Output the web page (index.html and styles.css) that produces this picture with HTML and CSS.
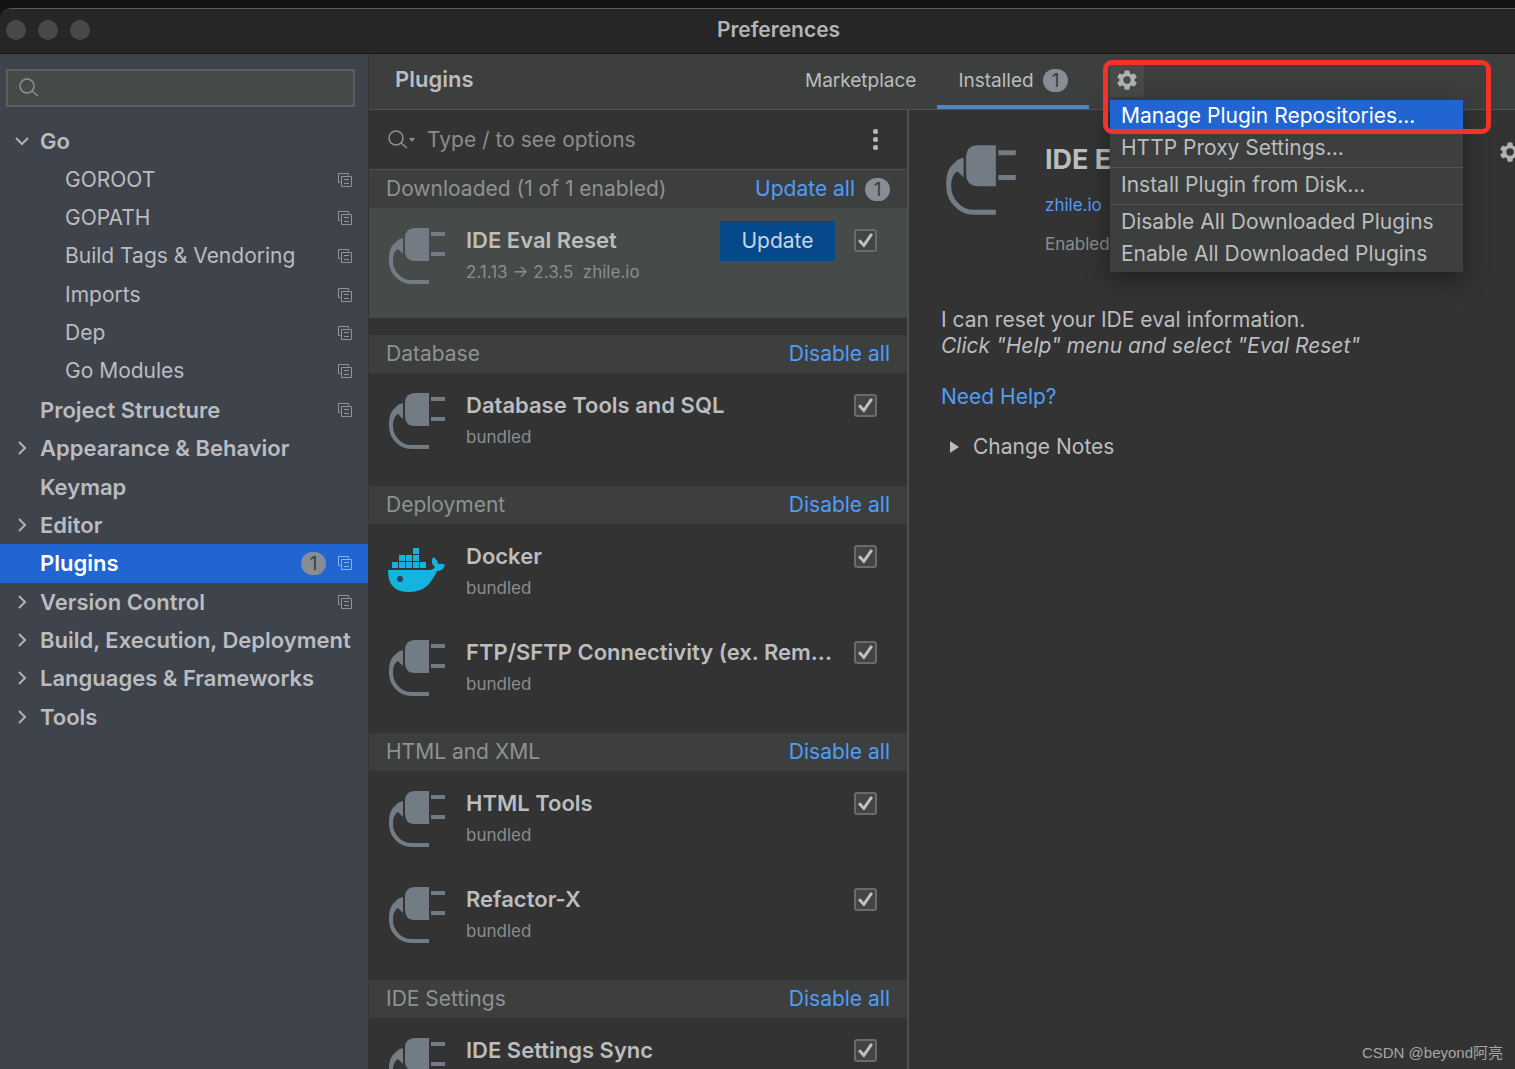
FILE: index.html
```html
<!DOCTYPE html>
<html lang="en">
<head>
<meta charset="utf-8">
<title>Preferences</title>
<link rel="stylesheet" href="styles.css">
</head>
<body>
<svg class="defs" aria-hidden="true">
  <symbol id="plug" viewBox="0 0 58 58">
    <path fill="currentColor" d="M41 1H27Q17 1 17 11V24Q17 34 27 34H41z"/>
    <path fill="currentColor" d="M15 11V27L10 22Q6 24 5 31L1 31Q1 20 8 15Q10 12 15 11z"/>
    <path fill="none" stroke="currentColor" stroke-width="4" d="M43 7H57M43 27H57M3 30V34C3 45 12 55 23 55H41"/>
  </symbol>
  <symbol id="docker" viewBox="0 0 58 58">
    <path fill="currentColor" d="M0 27H40Q46 27 47 24Q42 20 45 14Q50 17 50 21Q54 20 57 22Q55 28 49 28Q45 37 39 43Q32 49 20 49Q8 49 3 41Q0 36 0 27z"/>
    <path fill="currentColor" d="M4 19h6v6H4zM11 19h6v6h-6zM18 19h6v6h-6zM25 19h6v6h-6zM32 19h6v6h-6zM11 12h6v6h-6zM18 12h6v6h-6zM25 12h6v6h-6zM25 5h6v6h-6z"/>
    <circle cx="12" cy="36" r="3" fill="#2b4450"/>
  </symbol>
  <symbol id="copy" viewBox="0 0 16 16">
    <path fill="none" stroke="currentColor" d="M3.500 10.500H1.500V1.500H11.500V3.500M4.500 4.500H14.500V14.500H4.500zM7 7.500h5M7 11.500h5"/>
  </symbol>
  <symbol id="gear" viewBox="0 0 24 24">
    <path fill="currentColor" fill-rule="evenodd" d="M9.500 1.500H14.500L15.200 4.800A8 8 0 0 1 17 5.900L20.200 4.800 22.700 9.100 20.200 11.300V12.700L22.700 14.900 20.200 19.200 17 18.100A8 8 0 0 1 15.200 19.200L14.500 22.500H9.500L8.800 19.200A8 8 0 0 1 7 18.100L3.800 19.200 1.300 14.900 3.800 12.700V11.300L1.300 9.100 3.800 4.800 7 5.900A8 8 0 0 1 8.800 4.800zM12 16a4 4 0 1 1 0-8 4 4 0 0 1 0 8z"/>
  </symbol>
  <symbol id="lens" viewBox="0 0 22 22">
    <path fill="none" stroke="currentColor" stroke-width="1.500" d="M16 9A7 7 0 1 1 2 9A7 7 0 1 1 16 9zM14 14L20 19"/>
  </symbol>
  <symbol id="chevron" viewBox="0 0 16 16">
    <path fill="none" stroke="currentColor" stroke-width="2" d="M5 2L11 8L5 14"/>
  </symbol>
</svg>

<div class="window">
  <header class="titlebar">
    <div class="lights"><i></i><i></i><i></i></div>
    <h1>Preferences</h1>
  </header>
  <div class="body">
    <aside class="sidebar">
      <label class="search">
        <svg class="lens"><use href="#lens"/></svg>
        <input type="search" aria-label="Search settings">
      </label>
      <nav aria-label="Settings">
        <ul class="tree">
          <li class="open"><svg class="chev"><use href="#chevron"/></svg><a href="#">Go</a></li>
          <li class="child"><a href="#">GOROOT</a><svg class="copy"><use href="#copy"/></svg></li>
          <li class="child"><a href="#">GOPATH</a><svg class="copy"><use href="#copy"/></svg></li>
          <li class="child"><a href="#">Build Tags &amp; Vendoring</a><svg class="copy"><use href="#copy"/></svg></li>
          <li class="child"><a href="#">Imports</a><svg class="copy"><use href="#copy"/></svg></li>
          <li class="child"><a href="#">Dep</a><svg class="copy"><use href="#copy"/></svg></li>
          <li class="child"><a href="#">Go Modules</a><svg class="copy"><use href="#copy"/></svg></li>
          <li class="leaf"><a href="#">Project Structure</a><svg class="copy"><use href="#copy"/></svg></li>
          <li><svg class="chev"><use href="#chevron"/></svg><a href="#">Appearance &amp; Behavior</a></li>
          <li class="leaf"><a href="#">Keymap</a></li>
          <li><svg class="chev"><use href="#chevron"/></svg><a href="#">Editor</a></li>
          <li class="leaf selected"><a href="#" aria-current="page">Plugins</a><span class="count">1</span><svg class="copy"><use href="#copy"/></svg></li>
          <li><svg class="chev"><use href="#chevron"/></svg><a href="#">Version Control</a><svg class="copy"><use href="#copy"/></svg></li>
          <li><svg class="chev"><use href="#chevron"/></svg><a href="#">Build, Execution, Deployment</a></li>
          <li><svg class="chev"><use href="#chevron"/></svg><a href="#">Languages &amp; Frameworks</a></li>
          <li><svg class="chev"><use href="#chevron"/></svg><a href="#">Tools</a></li>
        </ul>
      </nav>
    </aside>

    <main class="main">
      <div class="topbar">
        <h2>Plugins</h2>
        <div class="tabs">
          <button class="tab">Marketplace</button>
          <button class="tab active">Installed <span class="count">1</span></button>
          <div class="options">
            <button class="gear" aria-label="Plugin options" aria-expanded="true"><svg><use href="#gear"/></svg></button>
            <div class="menu">
              <button class="hot">Manage Plugin Repositories...</button>
              <button>HTTP Proxy Settings...</button>
              <hr>
              <button>Install Plugin from Disk...</button>
              <hr>
              <button>Disable All Downloaded Plugins</button>
              <button>Enable All Downloaded Plugins</button>
            </div>
            <div class="marker"></div>
          </div>
        </div>
      </div>

      <div class="panes">
        <section class="list">
          <div class="filter">
            <svg class="lens"><use href="#lens"/></svg><i class="caret"></i>
            <input type="text" aria-label="Filter plugins" placeholder="Type / to see options">
            <button class="dots" aria-label="More"><i></i><i></i><i></i></button>
          </div>

          <div class="group">
            <div class="head"><h3>Downloaded (1 of 1 enabled)</h3><a href="#">Update all</a><span class="count">1</span></div>
            <article class="item current">
              <svg class="logo"><use href="#plug"/></svg>
              <div class="info"><h4>IDE Eval Reset</h4><p>2.1.13 → 2.3.5 &nbsp;zhile.io</p></div>
              <button class="update">Update</button>
              <input type="checkbox" checked aria-label="Enable IDE Eval Reset">
            </article>
          </div>

          <div class="group">
            <div class="head"><h3>Database</h3><a href="#">Disable all</a></div>
            <article class="item">
              <svg class="logo"><use href="#plug"/></svg>
              <div class="info"><h4>Database Tools and SQL</h4><p>bundled</p></div>
              <input type="checkbox" checked aria-label="Enable Database Tools and SQL">
            </article>
          </div>

          <div class="group">
            <div class="head"><h3>Deployment</h3><a href="#">Disable all</a></div>
            <article class="item">
              <svg class="logo docker"><use href="#docker"/></svg>
              <div class="info"><h4>Docker</h4><p>bundled</p></div>
              <input type="checkbox" checked aria-label="Enable Docker">
            </article>
            <article class="item">
              <svg class="logo"><use href="#plug"/></svg>
              <div class="info"><h4>FTP/SFTP Connectivity (ex. Rem...</h4><p>bundled</p></div>
              <input type="checkbox" checked aria-label="Enable FTP/SFTP Connectivity">
            </article>
          </div>

          <div class="group">
            <div class="head"><h3>HTML and XML</h3><a href="#">Disable all</a></div>
            <article class="item">
              <svg class="logo"><use href="#plug"/></svg>
              <div class="info"><h4>HTML Tools</h4><p>bundled</p></div>
              <input type="checkbox" checked aria-label="Enable HTML Tools">
            </article>
            <article class="item">
              <svg class="logo"><use href="#plug"/></svg>
              <div class="info"><h4>Refactor-X</h4><p>bundled</p></div>
              <input type="checkbox" checked aria-label="Enable Refactor-X">
            </article>
          </div>

          <div class="group">
            <div class="head"><h3>IDE Settings</h3><a href="#">Disable all</a></div>
            <article class="item">
              <svg class="logo"><use href="#plug"/></svg>
              <div class="info"><h4>IDE Settings Sync</h4></div>
              <input type="checkbox" checked aria-label="Enable IDE Settings Sync">
            </article>
          </div>
        </section>

        <section class="detail">
          <div class="summary">
            <svg class="biglogo"><use href="#plug"/></svg>
            <div class="facts">
              <h3>IDE Eval Reset</h3>
              <a href="#">zhile.io</a>
              <p>Enabled</p>
            </div>
            <button class="gear" aria-label="Plugin settings"><svg><use href="#gear"/></svg></button>
          </div>
          <p class="about">I can reset your IDE eval information.<br><em>Click "Help" menu and select "Eval Reset"</em></p>
          <a class="help" href="#">Need Help?</a>
          <details><summary>Change Notes</summary></details>
        </section>
      </div>
    </main>
  </div>
</div>
<div class="watermark">CSDN @beyond阿亮</div>
</body>
</html>
```

FILE: styles.css
```css
* { box-sizing: border-box; }

body {
  margin: 0;
  height: 100vh;
  overflow: hidden;
  background: #131313;
  color: #bbbdbf;
  font: 21px/26px Inter, "Noto Sans CJK SC", sans-serif;
}

h1, h2, h3, h4, p, ul { margin: 0; padding: 0; }
h1, h2, h3, h4 { font-size: inherit; }
a { color: #4f9df6; text-decoration: none; }
button, input { font: inherit; color: inherit; border: 0; padding: 0; background: none; }
svg { flex: none; }
.defs { position: absolute; width: 0; height: 0; }

/* The window runs past the right edge of the screen. */
.window {
  display: flex;
  flex-direction: column;
  width: calc(100% + 44px);
  height: calc(100vh - 8px);
  margin-top: 8px;
  border-top: 1px solid #5c5c5c;
  border-top-left-radius: 12px;
  overflow: hidden;
}

.titlebar {
  display: grid;
  grid-template-columns: 1fr auto 1fr;
  align-items: center;
  height: 45px;
  flex: none;
  padding: 0 8px 2px 6px;
  background: #262626;
  border-bottom: 1px solid #171717;
}
.titlebar h1 { font-weight: 600; color: #b4b4b4; }
.lights { display: flex; gap: 12px; }
.lights i { width: 20px; height: 20px; border-radius: 50%; background: #484848; }

.body { display: flex; flex: 1; min-height: 0; }

.sidebar { width: 369px; flex: none; background: #3f444c; border-right: 1px solid #323538; }
.search {
  display: flex;
  align-items: center;
  height: 38px;
  margin: 15px 13px 15px 6px;
  padding-left: 10px;
  background: #464a49;
  border: 2px solid #5b5e61;
}
.search input { flex: 1; min-width: 0; outline: 0; }
.lens { width: 22px; height: 22px; color: #8d9291; }

.tree { display: grid; min-height: 614px; list-style: none; font-size: 22px; font-weight: 600; color: #bbbcc0; }
.tree li { display: flex; align-items: center; min-height: 38px; padding: 0 15px 0 14px; }
.tree a { flex: 1; color: inherit; white-space: nowrap; }
.tree .leaf { padding-left: 40px; }
.tree .child { padding-left: 65px; font-size: 21px; font-weight: 400; }
.tree .selected { background: #2065d2; color: #fff; }
.chev { width: 16px; height: 16px; margin-right: 10px; color: #b0b2b5; }
.open .chev { transform: rotate(90deg); }
.copy { width: 16px; height: 16px; color: #8f9399; }
.selected .copy { color: #8fb0e0; }

.count {
  display: inline-block;
  min-width: 25px;
  height: 23px;
  border-radius: 12px;
  background: #868d94;
  color: #3c3f41;
  font-weight: 400;
  font-size: 19px;
  line-height: 23px;
  text-align: center;
}
.tree .count { margin-right: 11px; }

.main { display: flex; flex-direction: column; flex: 1; min-width: 0; }
.topbar {
  display: grid;
  grid-template-columns: 1fr auto 1fr;
  height: 56px;
  flex: none;
  background: #3c3f3e;
  border-bottom: 1px solid #525252;
}
.topbar h2 { padding: 12px 0 0 26px; font-size: 22px; font-weight: 600; }
.tabs { display: flex; }
.tab { padding: 3px 21px 0; font-size: 19px; border-bottom: 4px solid transparent; }
.tab.active { border-color: #4a88c7; }
.tab .count { margin-left: 4px; }
.options { position: relative; padding: 9px 0 0 21px; }
.gear { display: grid; place-items: center; width: 34px; height: 34px; color: #afb1b3; }
.options .gear { background: #484a4a; }
.gear svg { width: 22px; height: 22px; }

.menu {
  position: absolute;
  z-index: 1;
  top: 46px;
  left: 21px;
  display: flex;
  flex-direction: column;
  width: 353px;
  padding-bottom: 2px;
  background: #3c3f3e;
  box-shadow: 0 8px 24px rgba(0, 0, 0, .4);
}
.menu button { height: 32px; padding-left: 11px; text-align: left; white-space: nowrap; }
.menu .hot { background: #2065d2; color: #fff; }
.menu hr { width: 100%; margin: 3px 0 1px; border: 0; border-top: 1px solid #525454; }
.marker {
  position: absolute;
  z-index: 2;
  top: 6px;
  left: 14px;
  width: 388px;
  height: 74px;
  border: 5px solid #f0342a;
  border-radius: 9px;
  pointer-events: none;
}

.panes { display: flex; flex: 1; min-height: 0; background: #333; }
.list { width: 540px; flex: none; overflow: hidden; border-right: 2px solid #505050; }
.filter {
  display: flex;
  align-items: center;
  height: 60px;
  padding: 0 27px 0 18px;
  border-bottom: 1px solid #505050;
}
.caret { border: 3px solid transparent; border-top: 4px solid #8d9291; border-bottom: 0; }
.filter input { flex: 1; min-width: 0; margin-left: 12px; outline: 0; }
.filter input::placeholder { color: #8c8c8c; opacity: 1; }
.dots { display: grid; gap: 3px; padding: 2px; }
.dots i { width: 5px; height: 5px; border-radius: 2px; background: #b5b5b5; }

.group { padding-bottom: 17px; }
.head {
  display: flex;
  align-items: center;
  height: 38px;
  padding: 0 17px;
  background: #3c3f3e;
}
.head h3 { flex: 1; font-weight: 400; color: #909292; }
.head .count { margin-left: 10px; }
.item { display: flex; align-items: flex-start; height: 96px; padding: 19px 30px 0 19px; }
.item.current { height: 110px; background: #464a48; }
.logo { width: 58px; height: 58px; color: #737b84; }
.logo.docker { color: #14b4e0; }
.info { flex: 1; min-width: 0; margin-left: 20px; white-space: nowrap; }
.info h4 { font-size: 22px; font-weight: 600; }
.info p { margin-top: 6px; font-size: 17px; color: #8b8d8d; }
.update {
  width: 115px;
  height: 40px;
  margin: -6px 19px 0 0;
  background: #05498a;
  color: #c6d6e6;
}
input[type="checkbox"] {
  appearance: none;
  display: grid;
  place-items: center;
  flex: none;
  width: 23px;
  height: 23px;
  margin: 2px 0 0;
  border: 2px solid #6b6b6b;
  border-radius: 3px;
  background: #434544;
}
input[type="checkbox"]:checked::before {
  content: "";
  width: 15px;
  height: 15px;
  background: #c0c0c0;
  clip-path: polygon(0 55%, 15% 42%, 38% 66%, 84% 0, 100% 12%, 40% 98%);
}

.detail { flex: 1; min-width: 0; padding: 34px 32px 0; }
.summary { display: flex; align-items: flex-start; margin-left: 4px; }
.biglogo { width: 72px; height: 72px; color: #737b84; }
.facts { flex: 1; margin-left: 28px; font-size: 17px; }
.facts h3 { margin-bottom: 16px; font-size: 27px; line-height: 32px; }
.facts a { display: block; }
.facts p { margin-top: 13px; color: #8b8d8d; }
.summary .gear { margin-top: -9px; }
.about { margin-top: 50px; }
.help { display: block; margin-top: 25px; }
details { margin-top: 24px; }
summary { display: flex; align-items: center; padding-left: 9px; }
summary::before {
  content: "";
  margin-right: 14px;
  border: 6px solid transparent;
  border-left: 9px solid #bbb;
  border-right: 0;
}

.watermark {
  position: absolute;
  right: 12px;
  bottom: 3px;
  font: 15px/26px "Liberation Sans", "Noto Sans CJK SC", sans-serif;
  color: #a6a6a6;
}
```
